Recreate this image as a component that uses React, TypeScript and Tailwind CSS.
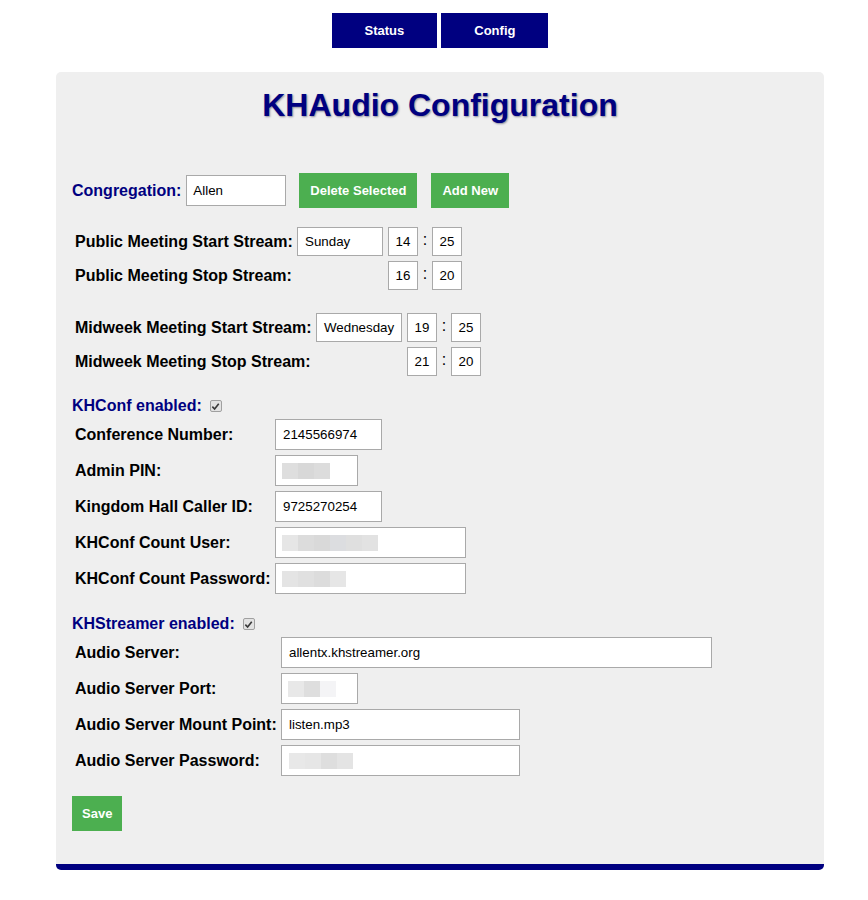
import React from "react";

const font = { fontFamily: '"Liberation Sans", Arial, sans-serif' };

function Blocks({ colors }: { colors: string[] }) {
  return (
    <div className="flex h-[16px]">
      {colors.map((c, i) => (
        <div key={i} className="h-full w-[16px]" style={{ backgroundColor: c }} />
      ))}
    </div>
  );
}

function TextField({ value, w }: { value: string; w: string }) {
  return (
    <div className={`${w} h-[31px] border border-[#a9a9a9] bg-white flex items-center pl-[7px] text-[13.33px] text-black`}>
      {value}
    </div>
  );
}

function BlurField({ colors, w, pl = "pl-[6px]" }: { colors: string[]; w: string; pl?: string }) {
  return (
    <div className={`${w} h-[31px] border border-[#a9a9a9] bg-white flex items-center ${pl}`}>
      <Blocks colors={colors} />
    </div>
  );
}

function Check() {
  return (
    <span className="ml-[8px] inline-flex h-[12px] w-[12px] items-center justify-center rounded-[2px] border border-[#a0a0a0] bg-[#e3e3e3]">
      <svg width="9" height="9" viewBox="0 0 10 10">
        <path d="M1.5 5.2 L4 7.8 L8.6 2" fill="none" stroke="#3a3a3a" strokeWidth="1.8" />
      </svg>
    </span>
  );
}

function SmallBox({ v }: { v: string }) {
  return (
    <div className="w-[30px] h-[29px] border border-[#a9a9a9] bg-white flex items-center justify-center text-[13.33px] text-black">
      {v}
    </div>
  );
}

function TimeRow({
  label,
  labelW,
  day,
  h,
  m,
}: {
  label: string;
  labelW: string;
  day?: string;
  h: string;
  m: string;
}) {
  return (
    <div className="flex items-center h-[29px]">
      <div className={`${labelW} shrink-0 font-bold text-[16px] text-black`}>{label}</div>
      <div className="w-[86px] h-[29px] shrink-0">
        {day && (
          <div className="w-[86px] h-[29px] border border-[#a9a9a9] bg-white flex items-center pl-[7px] text-[13.33px] text-black">
            {day}
          </div>
        )}
      </div>
      <div className="w-[5px]" />
      <SmallBox v={h} />
      <div className="w-[14px] text-center text-[16px] text-black leading-none pb-[3px]">:</div>
      <SmallBox v={m} />
    </div>
  );
}

function FieldRow({ label, labelW, children }: { label: string; labelW: string; children: React.ReactNode }) {
  return (
    <div className="flex items-center h-[31px]">
      <div className={`${labelW} shrink-0 font-bold text-[16px] text-black`}>{label}</div>
      {children}
    </div>
  );
}

export default function App() {
  return (
    <div className="min-h-[900px] bg-white pl-[12px]" style={font}>
      <div className="flex justify-center gap-[4px] pt-[13px]">
        <div className="h-[35px] px-[33px] bg-[#000080] text-white text-[13px] font-bold flex items-center">Status</div>
        <div className="h-[35px] px-[33px] bg-[#000080] text-white text-[13px] font-bold flex items-center">Config</div>
      </div>

      <div className="mx-auto mt-[24px] w-[768px] rounded-[5px] bg-[#efefef] border-b-[6px] border-[#000080] pl-[16px] pt-[15px] pb-[33px]">
        <h1 className="text-center text-[32px] font-bold text-[#000080] leading-[37px] pr-[16px] [text-shadow:1px_1px_2px_#8a8a9a]">
          KHAudio Configuration
        </h1>

        <div className="mt-[49px] flex items-center h-[35px]">
          <span className="text-[16px] font-bold text-[#000080]">Congregation:</span>
          <div className="ml-[5px] w-[100px] h-[31px] border border-[#a9a9a9] bg-white flex items-center pl-[6px] text-[13.33px] text-black">
            Allen
          </div>
          <div className="ml-[13px] h-[35px] px-[11px] bg-[#4caf50] text-white text-[13px] font-bold flex items-center">
            Delete Selected
          </div>
          <div className="ml-[14px] h-[35px] px-[11px] bg-[#4caf50] text-white text-[13px] font-bold flex items-center">
            Add New
          </div>
        </div>

        <div className="mt-[19px] pl-[3px] flex flex-col gap-[5px]">
          <TimeRow label="Public Meeting Start Stream:" labelW="w-[222px]" day="Sunday" h="14" m="25" />
          <TimeRow label="Public Meeting Stop Stream:" labelW="w-[222px]" h="16" m="20" />
        </div>

        <div className="mt-[23px] pl-[3px] flex flex-col gap-[5px]">
          <TimeRow label="Midweek Meeting Start Stream:" labelW="w-[241px]" day="Wednesday" h="19" m="25" />
          <TimeRow label="Midweek Meeting Stop Stream:" labelW="w-[241px]" h="21" m="20" />
        </div>

        <div className="mt-[20px] h-[20px] flex items-center">
          <span className="text-[16px] font-bold text-[#000080]">KHConf enabled:</span>
          <Check />
        </div>

        <div className="mt-[3px] pl-[3px] flex flex-col gap-[5px]">
          <FieldRow label="Conference Number:" labelW="w-[200px]">
            <TextField value="2145566974" w="w-[107px]" />
          </FieldRow>
          <FieldRow label="Admin PIN:" labelW="w-[200px]">
            <BlurField w="w-[83px]" colors={["#dedede", "#d8d8d8", "#dcdcdc"]} />
          </FieldRow>
          <FieldRow label="Kingdom Hall Caller ID:" labelW="w-[200px]">
            <TextField value="9725270254" w="w-[107px]" />
          </FieldRow>
          <FieldRow label="KHConf Count User:" labelW="w-[200px]">
            <BlurField w="w-[191px]" colors={["#e6e6e6", "#dcdcdc", "#d9d9d9", "#dcdde0", "#dfdfdf", "#e2e2e2"]} />
          </FieldRow>
          <FieldRow label="KHConf Count Password:" labelW="w-[200px]">
            <BlurField w="w-[191px]" colors={["#e4e4e4", "#e0e0e0", "#dcdcdc", "#e6e6e6"]} />
          </FieldRow>
        </div>

        <div className="mt-[20px] h-[20px] flex items-center">
          <span className="text-[16px] font-bold text-[#000080]">KHStreamer enabled:</span>
          <Check />
        </div>

        <div className="mt-[3px] pl-[3px] flex flex-col gap-[5px]">
          <FieldRow label="Audio Server:" labelW="w-[206px]">
            <TextField value="allentx.khstreamer.org" w="w-[431px]" />
          </FieldRow>
          <FieldRow label="Audio Server Port:" labelW="w-[206px]">
            <BlurField w="w-[77px]" colors={["#e8e8e8", "#dedede", "#f4f4f6"]} />
          </FieldRow>
          <FieldRow label="Audio Server Mount Point:" labelW="w-[206px]">
            <TextField value="listen.mp3" w="w-[239px]" />
          </FieldRow>
          <FieldRow label="Audio Server Password:" labelW="w-[206px]">
            <BlurField w="w-[239px]" pl="pl-[7px]" colors={["#e8e8e8", "#e6e6e6", "#dedede", "#e4e4e4"]} />
          </FieldRow>
        </div>

        <div className="mt-[20px] flex">
          <div className="h-[35px] px-[10px] bg-[#4caf50] text-white text-[13px] font-bold flex items-center">Save</div>
        </div>
      </div>
    </div>
  );
}
